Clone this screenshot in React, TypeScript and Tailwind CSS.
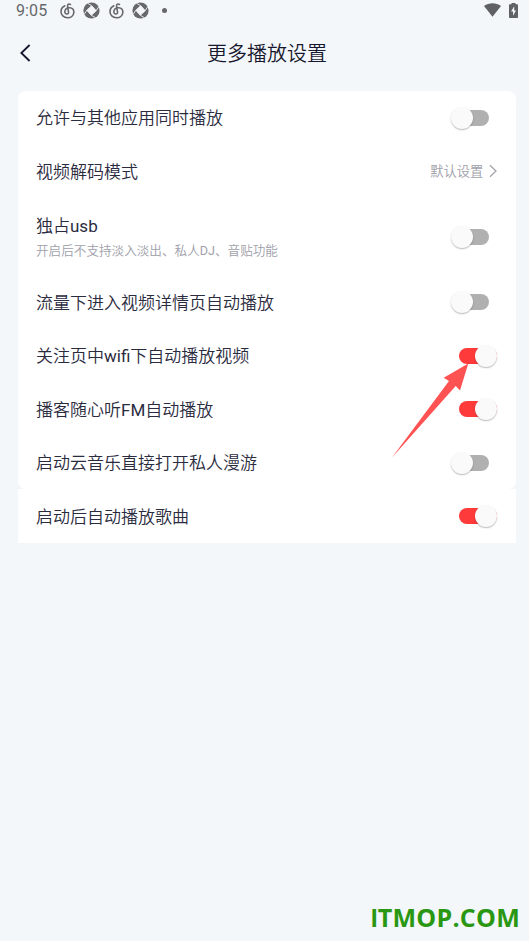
import React from "react";

const fontStack = "font-['Roboto','Noto_Sans_CJK_SC',sans-serif]";

function MusicIcon() {
  return (
    <svg width="15" height="16" viewBox="0 0 15 16" fill="none" stroke="#66686b" strokeWidth="1.6" strokeLinecap="round">
      <path d="M10.4 1.5C8.9.6 7.5 1.2 7.6 2.9L8.5 8.8C8.7 10.3 7.9 11.1 6.9 11C5.4 10.9 4.6 9.6 4.9 8.1C5.4 6 7.5 4.6 9.7 4.8C12.4 5.1 14 7.2 13.8 9.6C13.5 12.9 10.8 14.9 7.5 14.8C3.7 14.7.9 12 1 8.5C1.1 5.8 2.5 3.9 4.8 2.8" />
    </svg>
  );
}

function ShutterIcon() {
  return (
    <svg width="17" height="17" viewBox="0 0 17 17">
      <circle cx="8.5" cy="8.5" r="8.1" fill="#66686b" />
      <path d="M8.7 3.8L13.2 8.7L8.3 13.2L3.8 8.3Z" fill="#f3f7fa" stroke="#f3f7fa" strokeWidth="1" />
      <path d="M8.7 3.8L4.6 1.2M13.2 8.7L15.8 4.6M8.3 13.2L12.4 15.8M3.8 8.3L1.2 12.4" stroke="#f3f7fa" strokeWidth="0.9" />
    </svg>
  );
}

function Switch({ on }: { on?: boolean }) {
  return (
    <div className={`mt-px flex h-[22px] w-[46px] items-center ${on ? "justify-end" : ""}`}>
      <div className={`flex h-4 w-[38px] items-center rounded-full ${on ? "justify-end bg-[#ff3a3a]" : "bg-[linear-gradient(90deg,transparent_10px,#b0b0b0_10px)]"}`}>
        <div className="size-[22px] shrink-0 rounded-full bg-[#fafafa] shadow-[0_1px_1.5px_rgba(0,0,0,0.28)]" />
      </div>
    </div>
  );
}

function Latin({ children }: { children: React.ReactNode }) {
  return <span className="font-normal">{children}</span>;
}

interface RowProps {
  label: React.ReactNode;
  note?: React.ReactNode;
  on?: boolean;
  value?: string;
}

function Row({ label, note, on, value }: RowProps) {
  return (
    <div className={`flex items-center justify-between pl-[18px] pr-[19px] ${note ? "h-[77.5px]" : "h-[53.5px]"}`}>
      <div className={note ? "pt-[3px]" : "pt-[2px]"}>
        <div className="text-[17px] leading-6 text-[#2b2b40]">{label}</div>
        {note && <div className="mt-[3px] text-[12.6px] leading-5 text-[#a0a0aa]">{note}</div>}
      </div>
      {value ? (
        <div className="flex items-center gap-[6px] text-[13.3px] text-[#a0a0aa]">
          <span className="pt-[2px]">{value}</span>
          <svg width="8" height="14" viewBox="0 0 8 14" fill="none" stroke="#a4a4ad" strokeWidth="1.3">
            <path d="M1 1.2L7 7L1 12.8" />
          </svg>
        </div>
      ) : (
        <Switch on={on} />
      )}
    </div>
  );
}

export default function App() {
  return (
    <div className={`relative flex h-[941px] w-[529px] flex-col overflow-hidden bg-[#f3f7fa] font-[350] ${fontStack}`}>
      <div className="flex h-[22px] items-center justify-between pl-4 pr-[11px] font-normal">
        <div className="flex items-center">
          <span className="w-[44px] text-[16px] tracking-[0.1px] text-[#66686b]">9:05</span>
          <MusicIcon />
          <span className="ml-[8px] -mt-px"><ShutterIcon /></span>
          <span className="ml-[9px]"><MusicIcon /></span>
          <span className="ml-[8px] -mt-px"><ShutterIcon /></span>
          <span className="-mt-px ml-[13px] size-[5px] rounded-full bg-[#66686b]" />
        </div>
        <div className="flex items-center gap-2 pb-[2px]">
          <svg width="17" height="14" viewBox="0 0 17 14" fill="#5f6164">
            <path d="M0 3C5-.8 12-.8 17 3L8.5 13.8Z" />
          </svg>
          <svg width="9" height="15" viewBox="0 0 9 15">
            <path d="M2.5 1.3V0H6.5V1.3H8.3Q9 1.3 9 2V14.2Q9 15 8.3 15H.7Q0 15 0 14.2V2Q0 1.3.7 1.3Z" fill="#5f6164" />
            <path d="M5.2 3.3L2.1 8.5H4.1V12.8L7 7.4H5.2Z" fill="#f3f7fa" />
          </svg>
        </div>
      </div>
      <header className="grid h-[68.5px] grid-cols-[1fr_auto_1fr] items-start pl-5 pr-[15px] pt-[17px]">
        <svg className="mt-[5px]" width="11" height="18" viewBox="0 0 11 18" fill="none" stroke="#17172e" strokeWidth="1.9">
          <path d="M9.6 1L1.3 9L9.6 17" />
        </svg>
        <h1 className="text-[20px] leading-[30px] text-[#17172e]">更多播放设置</h1>
      </header>
      <main className="ml-[18px] w-[498.4px]">
        <section className="rounded-lg bg-white">
          <Row label="允许与其他应用同时播放" />
          <Row label="视频解码模式" value="默认设置" />
          <Row
            label={<>独占<Latin>usb</Latin></>}
            note={<>开启后不支持淡入淡出、私人<Latin>DJ</Latin>、音贴功能</>}
          />
          <Row label="流量下进入视频详情页自动播放" />
          <Row label={<>关注页中<Latin>wifi</Latin>下自动播放视频</>} on />
          <Row label={<>播客随心听<Latin>FM</Latin>自动播放</>} on />
          <Row label="启动云音乐直接打开私人漫游" />
        </section>
        <section className="bg-white">
          <Row label="启动后自动播放歌曲" on />
        </section>
      </main>
      <svg className="absolute left-[390px] top-[362px]" width="80" height="98" viewBox="390 362 80 98">
        <path d="M468.3 363.5L443.7 377.7L449 381L391.8 457.8L455.7 386L460 390.5Z" fill="#ff5252" />
      </svg>
      <div className="mt-auto flex h-[46px] items-baseline justify-end pr-[9px] pt-[4px] font-['Open_Sans',sans-serif] text-[25px] font-bold text-[#2a9713]">
        <span className="font-['Liberation_Sans',sans-serif]">I</span>
        <span className="tracking-[0.25px]">TMOP.COM</span>
      </div>
    </div>
  );
}
